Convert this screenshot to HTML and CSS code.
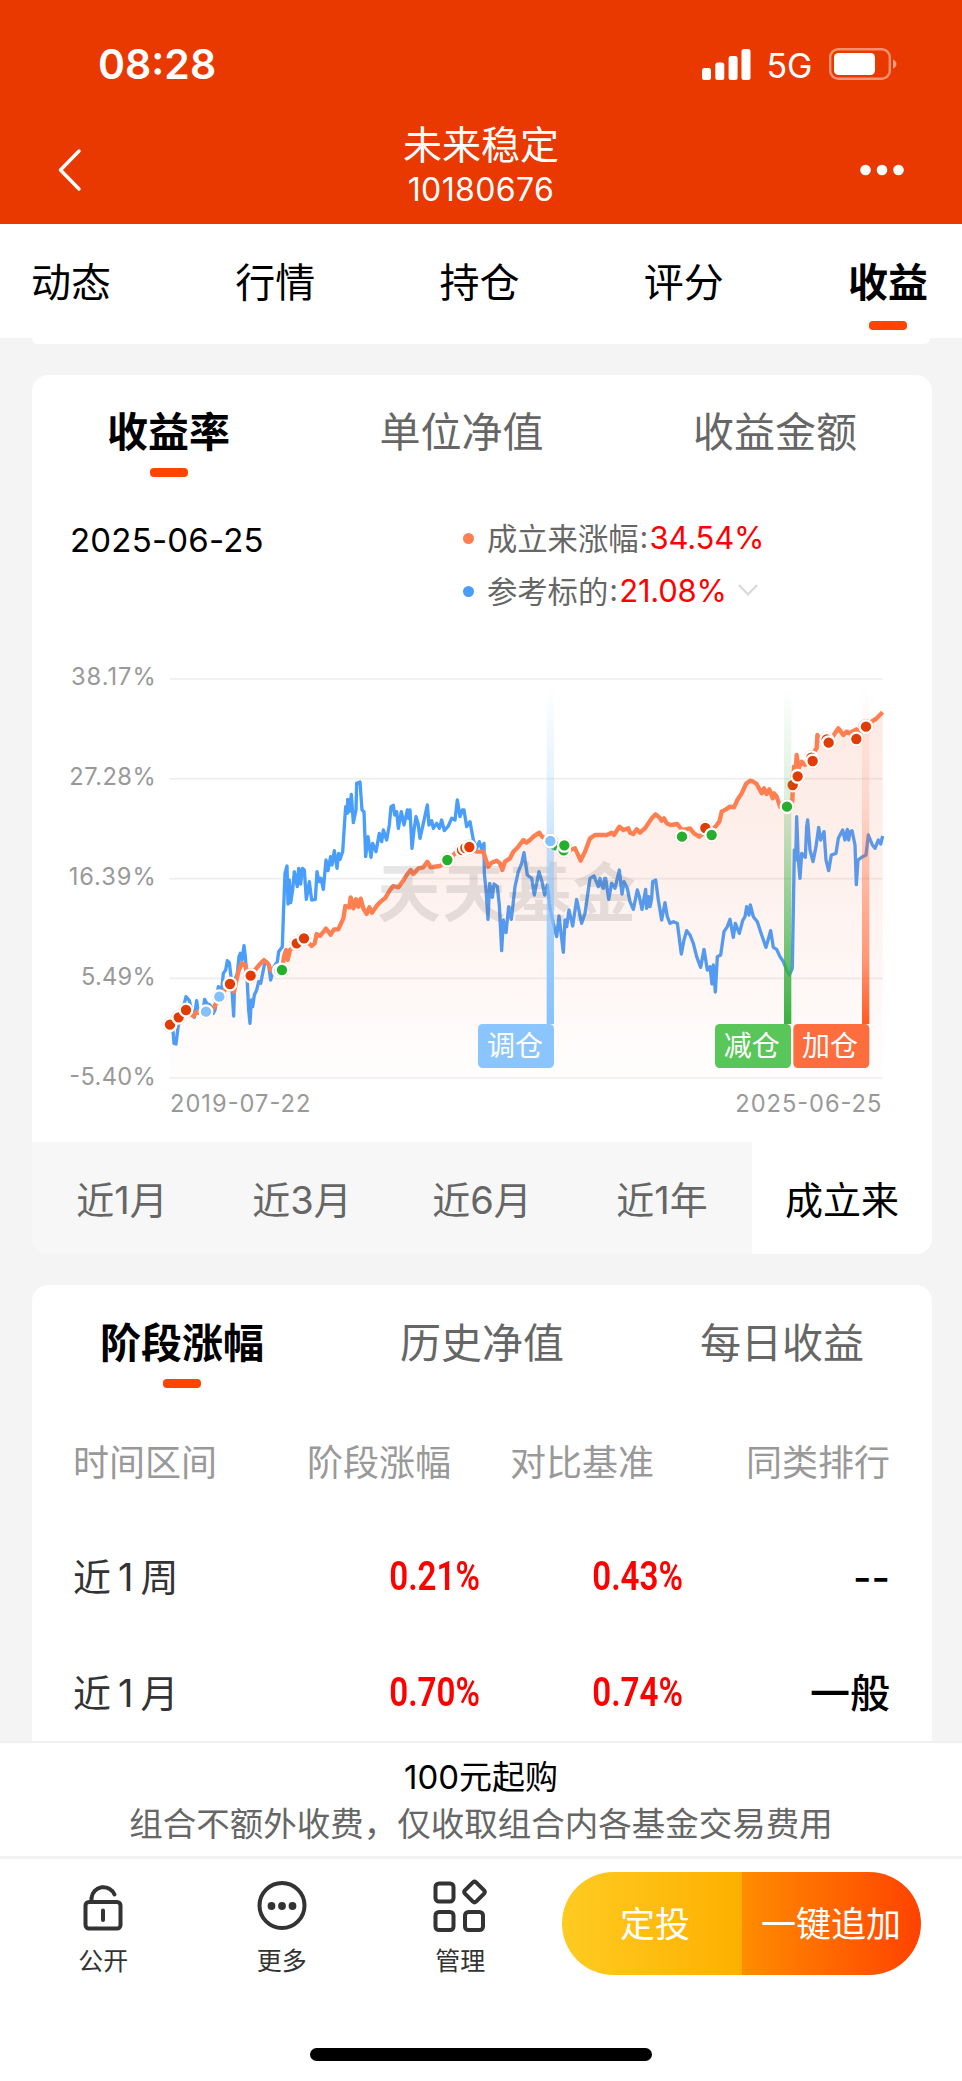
FILE: index.html
```html
<!DOCTYPE html>
<html lang="zh-CN">
<head>
<meta charset="utf-8">
<title>未来稳定</title>
<link rel="stylesheet" href="styles.css">
</head>
<body>
<div class="screen">
  <header class="header">
    <div class="status">
      <span class="time">08:28</span>
      <div class="status-right">
        <svg class="signal" width="49" height="31" viewBox="0 0 49 31" fill="#fff"><rect x="0" y="19" width="9" height="12" rx="2.5"/><rect x="13.3" y="13.500" width="9" height="17.500" rx="2.5"/><rect x="26.6" y="7" width="9" height="24" rx="2.5"/><rect x="39.500" y="0" width="9" height="31" rx="2.5"/></svg>
        <span class="net">5G</span>
        <svg class="battery" width="68" height="32" viewBox="0 0 68 32"><rect x="1.2" y="1.2" width="59.6" height="29.6" rx="8" fill="none" stroke="#fff" stroke-opacity=".45" stroke-width="2.4"/><rect x="5" y="5" width="41" height="22" rx="4.500" fill="#fff"/><path d="M64 11.500q3.400 1.500 3.400 4.500t-3.400 4.500z" fill="#fff" fill-opacity=".5"/></svg>
      </div>
    </div>
    <div class="nav">
      <svg class="back" width="24" height="42" viewBox="0 0 24 42"><path d="M21 2 2.500 21l18.500 19" fill="none" stroke="#fff" stroke-width="3.400" stroke-linecap="round" stroke-linejoin="round"/></svg>
      <div class="titles"><div class="title">未来稳定</div><div class="code">10180676</div></div>
      <svg class="dots" width="44" height="12" viewBox="0 0 44 12" fill="#fff"><circle cx="5.500" cy="6" r="5.300"/><circle cx="22" cy="6" r="5.300"/><circle cx="38.500" cy="6" r="5.300"/></svg>
    </div>
  </header>

  <nav class="main-tabs">
    <span>动态</span><span>行情</span><span>持仓</span><span>评分</span><span class="on">收益</span>
  </nav>
  <div class="prev-card"></div>

  <section class="card yield">
    <div class="sub-tabs first"><span class="on">收益率</span><span>单位净值</span><span>收益金额</span></div>
    <div class="summary">
      <div class="date">2025-06-25</div>
      <div class="legend">
        <div class="item"><i class="dot orange"></i><span>成立来涨幅</span><span class="colon">:</span><b class="v1">34.54%</b></div>
        <div class="item"><i class="dot blue"></i><span>参考标的</span><span class="colon">:</span><b class="v2">21.08%</b><svg class="chev" width="22" height="14" viewBox="0 0 22 14"><path d="M2 2l9 9.500L20 2" fill="none" stroke="#d5d8de" stroke-width="2.200"/></svg></div>
      </div>
    </div>
    <svg class="chart" width="900" height="460" viewBox="-84 0 2700 1380">
      <defs>
        <linearGradient id="area" x1="0" y1="150" x2="0" y2="1254" gradientUnits="userSpaceOnUse"><stop offset="0" stop-color="#f0704a" stop-opacity=".15"/><stop offset=".45" stop-color="#f0704a" stop-opacity=".1"/><stop offset="1" stop-color="#f0704a" stop-opacity=".01"/></linearGradient>
        <linearGradient id="gb" x1="0" y1="80" x2="0" y2="1092" gradientUnits="userSpaceOnUse"><stop offset="0" stop-color="#8bc5fd" stop-opacity="0"/><stop offset=".3" stop-color="#8bc5fd" stop-opacity=".25"/><stop offset=".8" stop-color="#8bc5fd" stop-opacity=".9"/><stop offset="1" stop-color="#85c3fd"/></linearGradient>
        <linearGradient id="gg" x1="0" y1="80" x2="0" y2="1092" gradientUnits="userSpaceOnUse"><stop offset="0" stop-color="#3bb143" stop-opacity="0"/><stop offset=".35" stop-color="#3bb143" stop-opacity=".2"/><stop offset=".8" stop-color="#3bb143" stop-opacity=".75"/><stop offset="1" stop-color="#3bb143"/></linearGradient>
        <linearGradient id="gr" x1="0" y1="80" x2="0" y2="1092" gradientUnits="userSpaceOnUse"><stop offset="0" stop-color="#ff5a26" stop-opacity="0"/><stop offset=".35" stop-color="#ff5a26" stop-opacity=".16"/><stop offset=".8" stop-color="#ff5a26" stop-opacity=".6"/><stop offset="1" stop-color="#ff5a26"/></linearGradient>
      </defs>
      <path d="M328 57H2468M328 356H2468M328 656H2468M328 955H2468M328 1254H2468" stroke="#eee" stroke-width="5"/>
      <g class="axis">
        <text x="33" y="76" textLength="254">38.17%</text><text x="28" y="374" textLength="259">27.28%</text><text x="26" y="674" textLength="261">16.39%</text><text x="63" y="974" textLength="224">5.49%</text><text x="28" y="1274" textLength="259">-5.40%</text>
        <text x="330" y="1356" textLength="421">2019-07-22</text><text x="2026" y="1356" textLength="438">2025-06-25</text>
      </g>
      <g fill="none" stroke-linejoin="round">
        <path stroke="#499dfb" stroke-width="10" d="M330 1094L338 1100 342 1150 348 1152 355 1095 362 1080 372 1035 378 1010 388 1022 396 1055 403 1072 410 1022 415 1060 428 1060 434 1018 440 1030 450 1035 460 1060 465 1050 475 980 485 990 490 940 497 930 502 902 508 908 514 960 521 1068 524 960 532 940 537 890 541 880 546 900 552 857 556 890 562 970 566 1050 570 1090 574 1020 578 1040 583 1005 590 990 596 965 602 970 607 945 613 915 620 905 626 915 632 960 642 920 652 905 656 875 667 860 670 770 675 640 681 618 684 732 688 660 692 728 698 690 703 635 712 680 716 625 722 672 727 625 733 630 739 718 748 665 755 720 766 718 771 635 777 665 783 655 790 688 798 600 804 632 812 590 816 615 823 572 831 625 836 580 840 598 848 575 853 500 857 440 862 460 863 418 868 455 874 403 880 488 888 450 890 370 900 366 906 450 912 455 917 590 924 530 933 592 938 550 948 575 958 520 965 545 970 510 980 540 988 495 993 440 1000 436 1004 465 1010 455 1015 505 1024 455 1032 495 1042 450 1045 475 1050 450 1056 565 1062 510 1068 470 1074 490 1080 535 1090 490 1102 435 1107 495 1115 482 1120 505 1130 490 1138 505 1145 480 1153 512 1165 498 1175 475 1185 480 1192 420 1200 470 1207 450 1212 450 1220 500 1230 485 1240 540 1250 565 1258 545 1266 570 1272 550 1273 640 1278 690 1284 778 1289 670 1297 712 1302 672 1312 680 1318 735 1325 872 1330 780 1338 818 1346 740 1354 778 1365 680 1375 635 1385 610 1392 578 1402 645 1415 655 1423 705 1437 635 1446 665 1454 705 1462 675 1470 745 1480 790 1490 830 1497 768 1510 877 1515 780 1520 800 1527 750 1538 798 1550 718 1565 790 1575 760 1590 655 1602 648 1615 680 1620 655 1624 675 1630 685 1634 655 1637 655 1646 718 1655 670 1665 685 1672 655 1678 630 1686 702 1692 665 1702 685 1710 725 1720 748 1732 690 1738 710 1746 748 1757 688 1760 745 1766 710 1770 740 1775 715 1778 665 1787 660 1795 720 1805 780 1815 728 1822 770 1830 790 1840 785 1852 790 1864 882 1872 840 1880 812 1890 825 1900 850 1910 890 1922 922 1932 868 1942 930 1950 920 1956 972 1960 915 1966 996 1972 890 1982 885 1992 815 2002 800 2010 778 2020 832 2026 790 2038 820 2048 782 2055 770 2060 740 2067 765 2071 735 2080 770 2092 785 2105 825 2118 862 2132 812 2140 862 2150 868 2160 890 2170 905 2180 930 2188 945 2197 925 2203 570 2207 600 2210 470 2215 600 2220 655 2225 580 2236 592 2240 500 2243 480 2250 570 2259 605 2268 560 2276 502 2282 540 2292 515 2298 600 2306 632 2314 585 2328 580 2335 535 2348 510 2355 540 2362 508 2366 540 2370 515 2376 512 2385 555 2389 674 2394 600 2405 592 2418 585 2425 525 2437 555 2445 565 2455 540 2462 552 2468 528"/>
        <path class="area" d="M330 1094L356 1072 378 1050 400 1068 438 1055 478 1010 510 972 522 995 545 910 572 947 612 900 632 930 666 930 678 870 710 850 732 835 755 858 770 822 798 806 812 824 835 808 850 775 858 738 872 712 900 718 920 762 952 735 990 690 1040 645 1102 605 1140 618 1185 580 1228 560 1270 575 1285 620 1327 630 1350 595 1390 540 1438 518 1470 543 1530 570 1562 602 1590 535 1640 525 1678 500 1720 522 1787 463 1832 492 1886 505 1918 530 1978 485 1985 455 2022 442 2070 362 2138 415 2160 440 2181 440 2198 375 2210 285 2216 325 2252 290 2274 225 2300 235 2335 205 2389 208 2418 195 2468 157V1254H330Z"/>
        <path stroke="#ff7f50" stroke-width="13" d="M330 1094L356 1072 378 1050 400 1068 412 1055 438 1055 460 1045 478 1010 510 972 522 995 535 935 545 910 556 915 562 945 572 947 585 930 600 912 612 900 625 912 632 930 645 935 666 930 672 890 678 870 683 900 690 870 710 850 732 835 755 858 764 850 770 822 780 828 798 806 812 824 822 808 835 808 850 775 856 738 868 742 872 712 880 745 888 718 895 740 902 716 910 745 920 762 928 742 936 758 952 735 965 722 975 715 990 690 1000 678 1015 682 1028 665 1040 645 1052 630 1060 642 1075 625 1090 622 1102 605 1112 622 1140 618 1162 605 1185 580 1210 570 1228 560 1250 575 1270 575 1278 600 1285 620 1295 608 1310 602 1320 610 1327 630 1335 605 1350 595 1360 575 1375 560 1390 540 1400 548 1410 540 1420 530 1438 518 1446 530 1470 543 1510 560 1530 570 1545 565 1552 580 1562 602 1575 575 1590 535 1605 525 1640 525 1655 518 1662 525 1678 500 1690 510 1705 505 1710 518 1720 522 1730 508 1740 518 1755 505 1765 490 1775 475 1787 463 1798 472 1805 482 1812 475 1820 490 1832 495 1852 492 1866 510 1890 505 1902 520 1918 530 1936 515 1955 510 1968 498 1978 485 1985 455 1998 448 2010 440 2022 442 2032 420 2045 400 2058 372 2070 362 2080 365 2090 372 2105 400 2112 385 2120 402 2128 388 2138 415 2142 400 2150 410 2160 440 2172 448 2181 440 2197 425 2199 375 2202 320 2208 318 2210 285 2216 325 2225 305 2235 315 2252 290 2270 265 2272 225 2280 240 2300 235 2315 235 2328 215 2335 205 2350 225 2360 215 2368 220 2389 208 2400 215 2418 195 2435 185 2450 175 2468 157"/>
      </g>
      <text class="watermark" x="952" y="768" textLength="776">天天基金</text>
      <g class="marks">
        <g fill="#e23c05"><circle cx="330" cy="1094" r="19"/><circle cx="356" cy="1072" r="19"/><circle cx="378" cy="1050" r="19"/><circle cx="510" cy="972" r="19"/><circle cx="572" cy="947" r="19"/><circle cx="710" cy="850" r="19"/><circle cx="732" cy="835" r="19"/><circle cx="1206" cy="570" r="19"/><circle cx="1216" cy="564" r="19"/><circle cx="1228" cy="561" r="19"/><circle cx="1936" cy="504" r="19"/><circle cx="2198" cy="375" r="19"/><circle cx="2213" cy="349" r="19"/><circle cx="2254" cy="293" r="19"/><circle cx="2258" cy="303" r="19"/><circle cx="2300" cy="238" r="19"/><circle cx="2306" cy="248" r="19"/><circle cx="2389" cy="237" r="19"/><circle cx="2418" cy="200" r="19"/></g>
        <g fill="#83c1fb"><circle cx="438" cy="1055" r="19"/><circle cx="478" cy="1010" r="19"/><circle cx="658" cy="932" r="19"/></g>
        <g fill="#27ae2c"><circle cx="666" cy="930" r="19"/><circle cx="1162" cy="600" r="19"/><circle cx="1485" cy="556" r="19"/><circle cx="1511" cy="571" r="19"/><circle cx="1513" cy="556" r="19"/><circle cx="1866" cy="530" r="19"/><circle cx="1955" cy="525" r="19"/></g>
      </g>
      <path fill="url(#gb)" d="M1460 80h22v1012h-22z"/><path fill="url(#gg)" d="M2172 80h22v1012h-22z"/><path fill="url(#gr)" d="M2406 80h22v1012h-22z"/>
      <g class="marks"><circle cx="1471" cy="543" r="19" fill="#83c1fb"/><circle cx="2181" cy="440" r="19" fill="#27ae2c"/><circle cx="2418" cy="200" r="19" fill="#e23c05"/></g>
      <rect x="1254" y="1092" width="228" height="132" rx="14" fill="#8bc5fd"/><rect x="1965" y="1092" width="228" height="132" rx="14" fill="#59c659"/><rect x="2200" y="1092" width="228" height="132" rx="14" fill="#fe6d3d"/>
      <g class="tag"><text x="1365" y="1189">调仓</text><text x="2075" y="1189">减仓</text><text x="2310" y="1189">加仓</text></g>
    </svg>
    <div class="periods"><span>近1月</span><span>近3月</span><span>近6月</span><span>近1年</span><span class="on">成立来</span></div>
  </section>

  <section class="card stage">
    <div class="sub-tabs"><span class="on">阶段涨幅</span><span>历史净值</span><span>每日收益</span></div>
    <div class="row head"><span>时间区间</span><span>阶段涨幅</span><span>对比基准</span><span>同类排行</span></div>
    <div class="row"><span>近<em>1</em>周</span><span class="num">0.21%</span><span class="num">0.43%</span><span class="rank">--</span></div>
    <div class="row"><span>近<em>1</em>月</span><span class="num">0.70%</span><span class="num">0.74%</span><span class="rank">一般</span></div>
  </section>

  <footer class="footer">
    <div class="notice"><div class="min">100元起购</div><div class="fee">组合不额外收费，仅收取组合内各基金交易费用</div></div>
    <div class="bar">
      <div class="acts">
        <div class="act"><svg width="60" height="60" viewBox="0 0 60 60"><rect x="12.500" y="25" width="35" height="26.500" rx="3.500"/><path d="M18.500 25v-4a12 12 0 0 1 23-3.500M30 33.500v9.500"/></svg><span>公开</span></div>
        <div class="act"><svg width="60" height="60" viewBox="0 0 60 60"><circle cx="30" cy="28.500" r="22.500"/><g class="solid"><circle cx="19.500" cy="29" r="3.900"/><circle cx="30" cy="29" r="3.900"/><circle cx="40.500" cy="29" r="3.900"/></g></svg><span>更多</span></div>
        <div class="act"><svg width="60" height="60" viewBox="0 0 60 60"><rect x="5.500" y="6.500" width="18" height="18" rx="3.500"/><path d="M42.900 5.400q1.600-1.400 3.200 0l8 8q1.400 1.600 0 3.200l-8 8q-1.600 1.400-3.200 0l-8-8q-1.400-1.600 0-3.200z"/><rect x="5.500" y="35" width="18" height="18" rx="3.500"/><rect x="35" y="35" width="18" height="18" rx="3.500"/></svg><span>管理</span></div>
      </div>
      <div class="buttons"><span class="plan">定投</span><span class="add">一键追加</span></div>
    </div>
    <div class="home"></div>
  </footer>
</div>
</body>
</html>
```
FILE: styles.css
```css
* { box-sizing: border-box; }
body { margin: 0; font-family: Inter, "Noto Sans CJK SC", sans-serif; background: #f4f4f4; color: #000; }
svg { display: block; flex: none; }
span { white-space: nowrap; }
.screen { width: 962px; height: 2081px; overflow: hidden; display: flex; flex-direction: column; }

.header { height: 224px; flex: none; background: #ea3801; color: #fff; }
.status { height: 120px; padding: 8px 65px 0 98px; display: flex; align-items: center; justify-content: space-between; }
.time { font-size: 41px; font-weight: 600; }
.status-right { display: flex; align-items: center; }
.net { font-size: 34px; font-weight: 400; margin: 4px 17px 0 16px; line-height: 40px; letter-spacing: -0.3px; }
.nav { height: 104px; padding: 0 58px; display: flex; justify-content: space-between; }
.back { margin-top: 29px; }
.dots { margin-top: 44px; }
.titles { text-align: center; padding: 1px 0 0 20px; }
.title { font-size: 39px; line-height: 48px; }
.code { font-size: 32px; line-height: 42px; letter-spacing: 0.4px; }

.main-tabs { height: 114px; flex: none; background: #fff; display: flex; justify-content: space-between; padding: 30px 34px 0 31px; font-size: 40px; line-height: 58px; }
.on { display: flex; flex-direction: column; align-items: center; color: #000; }
.main-tabs .on, .sub-tabs .on { font-weight: 700; }
.main-tabs .on::after, .sub-tabs .on::after { content: ""; width: 38px; height: 9px; border-radius: 4px; background: #ff4400; }
.main-tabs .on::after { margin-top: 9px; }
.prev-card { height: 6px; flex: none; margin: 0 32px 31px; background: #fff; border-radius: 0 0 14px 14px; }

.card { width: 900px; margin-left: 32px; background: #fff; border-radius: 16px; overflow: hidden; flex: none; }
.yield { height: 879px; margin-bottom: 31px; }
.sub-tabs { display: flex; justify-content: space-between; padding: 28px 68px 0 68px; height: 116px; font-size: 41px; line-height: 60px; color: #666; }
.sub-tabs.first { padding: 27px 75px 0 75px; }
.sub-tabs .on::after { margin-top: 6px; }
.summary { height: 169px; padding: 19px 0 0 38px; display: flex; }
.date { width: 393px; font-size: 33px; line-height: 60px; letter-spacing: 0.2px; }
.legend { font-size: 30.300px; color: #666; }
.item { display: flex; align-items: center; height: 52px; }
.legend .item:first-child { height: 54px; }
.dot { width: 11px; height: 11px; border-radius: 50%; margin: 2px 13px 0 0; }
.orange { background: #ff7f50; }
.blue { background: #499dfb; }
.colon { width: 11px; text-align: center; }
.item b { font-weight: 400; font-size: 31px; letter-spacing: -0.2px; color: #f00; }
.chev { margin-left: 10px; }
.axis text { font-size: 71px; fill: #999; }
.area { fill: url(#area); }
.watermark { font: 700 190px "Noto Sans CJK SC", sans-serif; fill: #555; fill-opacity: .15; }
.marks { stroke: #fff; stroke-width: 7px; filter: drop-shadow(0 0 2px rgba(226, 60, 5, .5)); }
.tag { fill: #fff; font: 400 84px "Noto Sans CJK SC", sans-serif; text-anchor: middle; }
.periods { margin-top: 22px; height: 112px; display: grid; grid-template-columns: repeat(5, 180px); background: #f7f7f7; color: #666; font-size: 38px; line-height: 116px; text-align: center; }
.periods .on { background: #fff; }

.stage { height: 456px; border-radius: 16px 16px 0 0; }
.row { display: grid; grid-template-columns: 200px 207px 203px 1fr; padding: 0 42px 0 41px; height: 116px; line-height: 116px; font-size: 38px; color: #333; text-align: right; }
.row span:first-child { text-align: left; }
.row em { font-style: normal; padding: 0 7px; }
.head { font-size: 36px; height: 118px; line-height: 124px; color: #999; }
.head span:nth-child(2), .head span:nth-child(3) { padding-right: 29px; }
.num { font-family: Roboto, sans-serif; font-weight: 600; font-size: 40px; color: #f00; transform: scaleX(.83); transform-origin: right; }
.row .rank { font-size: 40px; color: #000; font-weight: 500; line-height: 118px; }

.footer { flex: 1; background: #fff; border-top: 2px solid #f0f0f0; }
.notice { height: 116px; border-bottom: 3px solid #f2f2f2; text-align: center; padding-top: 11px; }
.min { font-size: 33px; line-height: 46px; }
.fee { font-size: 33.500px; line-height: 48px; color: #666; }
.bar { display: flex; justify-content: space-between; padding: 13px 41px 0 14px; height: 189px; }
.acts { display: flex; padding-top: 5px; }
.act { width: 178.500px; display: flex; flex-direction: column; align-items: center; font-size: 25px; line-height: 36px; color: #333; }
.act svg { margin-bottom: 6px; fill: none; stroke: #333; stroke-width: 4px; stroke-linecap: round; stroke-linejoin: round; }
.act .solid { fill: #333; stroke: none; }
.buttons { display: flex; width: 359px; height: 103px; border-radius: 52px; overflow: hidden; color: #fff; font-size: 35px; line-height: 104px; }
.plan { width: 180px; padding-left: 58px; background: linear-gradient(90deg, #ffcb21, #fdb000); }
.add { flex: 1; padding-left: 19px; background: linear-gradient(90deg, #ff8c00, #ff4200); }
.home { width: 342px; height: 13px; border-radius: 7px; background: #000; margin: 0 auto; }
```
